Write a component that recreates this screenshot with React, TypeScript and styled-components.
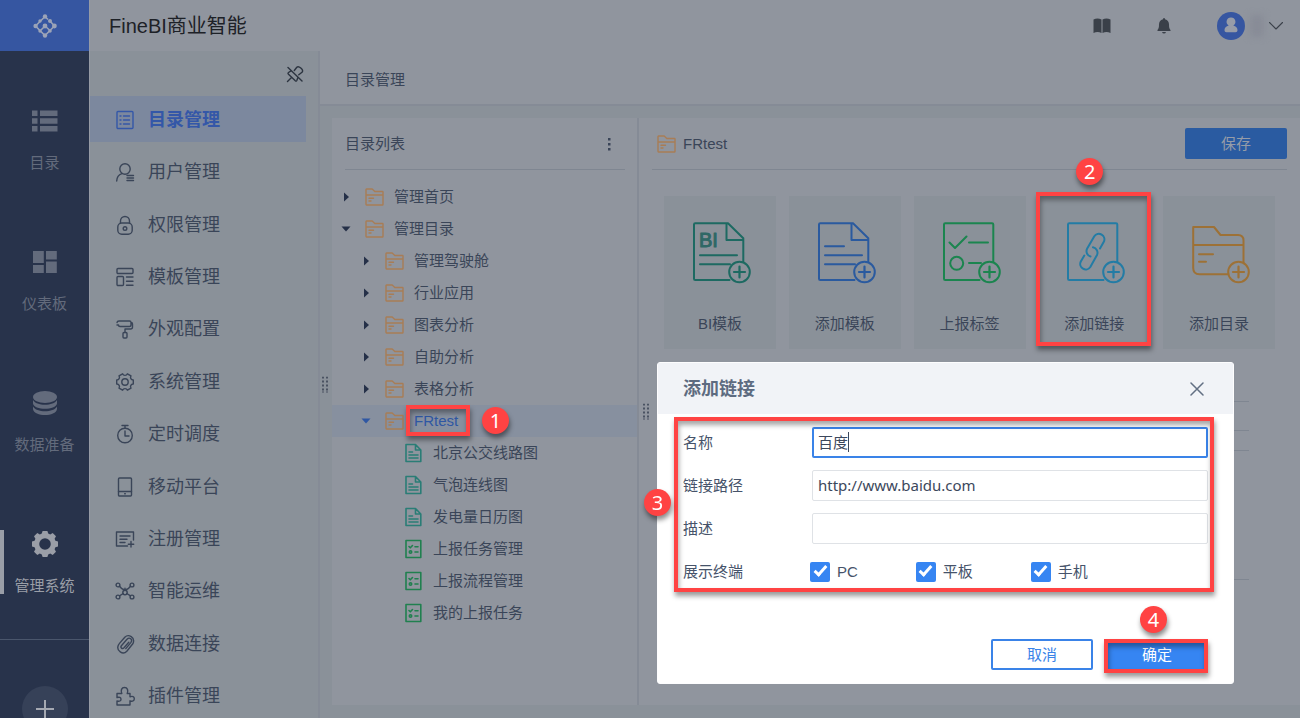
import React from 'react';
import styled, { createGlobalStyle, css } from 'styled-components';

const sans = "'Liberation Sans', 'Noto Sans CJK SC', sans-serif";

const c = {
  surface: '#90959e',
  ground: '#8a9199',
  line: '#858b96',
  rule: '#7f8691',
  rail: '#28334b',
  brand: '#3656a1',
  text: '#3a4558',
  blue: '#2f57a3',
  button: '#2a5ba1',
  orange: '#a87d56',
  teal: '#2a7d76',
  green: '#20804f',
  red: '#ff4343',
  accent: '#3685f2',
};

const GlobalStyle = createGlobalStyle`
  *, *::before, *::after { box-sizing: border-box; }
  body { margin: 0; background: ${c.ground}; color: ${c.text}; font: 15px/24px ${sans}; }
  button, input { font-family: inherit; font-size: inherit; color: inherit; }
  button { margin: 0; padding: 0; border: 0; background: none; cursor: pointer; }
  a { color: inherit; text-decoration: none; }
  ul { margin: 0; padding: 0; list-style: none; }
  h1, h2, p { margin: 0; font-weight: 400; }
  svg { display: block; flex: none; }
`;

/* ---------- frame ---------- */

const Page = styled.div`
  display: grid;
  grid-template: 51px minmax(0, 1fr) / 90px minmax(0, 1fr);
  height: 100vh;
  overflow: hidden;
`;

const Logo = styled.a`
  display: flex;
  align-items: center;
  justify-content: center;
  background: ${c.brand};
  border-right: 1px solid #969ba5;
`;

const TopBar = styled.header`
  display: flex;
  align-items: center;
  padding: 0 17px 0 19px;
  background: ${c.surface};
`;

const Product = styled.h1`
  flex: 1;
  font-size: 20px;
  line-height: 28px;
  color: #1d2127;
`;

const TopTools = styled.div`
  display: flex;
  align-items: center;
  color: #3a4049;
`;

const ToolButton = styled.button`
  display: flex;
  margin-right: 46px;
`;

const UserButton = styled.button`
  display: flex;
  align-items: center;
  gap: 5px;
`;

const BlurredName = styled.span`
  width: 14px;
  height: 22px;
  background: #888c97;
  filter: blur(3px);
`;

/* ---------- left rail ---------- */

const Rail = styled.nav`
  overflow: hidden;
  padding-top: 24px;
  background: ${c.rail};
  border-right: 1px solid #969ba5;
`;

const RailLink = styled.a<{ $active?: boolean }>`
  position: relative;
  display: flex;
  flex-direction: column;
  align-items: center;
  gap: 17px;
  height: 141px;
  padding-top: 33px;
  color: ${p => (p.$active ? '#9a9ea7' : '#636b7c')};
  ${p => p.$active && css`
    &::before {
      content: '';
      position: absolute;
      left: 0;
      top: 32px;
      width: 4px;
      height: 64px;
      background: #9a9ea7;
    }
  `}
`;

const RailFoot = styled.div`
  display: flex;
  justify-content: center;
  padding-top: 46px;
  border-top: 1px solid #4a566c;
`;

const RoundButton = styled.button`
  display: flex;
  align-items: center;
  justify-content: center;
  width: 46px;
  height: 46px;
  border-radius: 50%;
  background: #364158;
  color: #a5a9b2;
`;

/* ---------- management menu ---------- */

const Body = styled.div`
  display: grid;
  grid-template-columns: 230px minmax(0, 1fr);
  min-height: 0;
`;

const Side = styled.aside`
  position: relative;
  display: flex;
  flex-direction: column;
  min-height: 0;
  border-right: 2px solid ${c.line};
`;

const PinBar = styled.div`
  display: flex;
  align-items: center;
  justify-content: flex-end;
  height: 45px;
  padding-right: 14px;
  color: #2c3440;
`;

const Menu = styled.ul`
  flex: 1;
  display: flex;
  flex-direction: column;
  justify-content: space-between;
`;

const MenuLink = styled.a<{ $active?: boolean }>`
  display: flex;
  align-items: center;
  gap: 13px;
  height: 46px;
  margin-right: 12px;
  padding: 2px 0 0 25px;
  font-size: 18px;
  ${p => p.$active && css`
    background: #7c889e;
    color: #3457a8;
    font-weight: 700;
  `}
`;

const Grip = styled.span`
  position: absolute;
  top: 50%;
  left: 100%;
  transform: translateY(-50%);
  padding-left: 4px;
  color: #4a5362;
`;

/* ---------- content ---------- */

const Main = styled.main`
  display: grid;
  grid-template-rows: 55px minmax(0, 1fr);
  min-height: 0;
`;

const Crumb = styled.div`
  display: flex;
  align-items: center;
  padding: 4px 0 0 25px;
  background: ${c.surface};
  border-bottom: 2px solid ${c.line};
`;

const Panels = styled.div`
  display: grid;
  grid-template-columns: 307px minmax(0, 1fr);
  min-height: 0;
  margin: 12px 0 13px 12px;
  background: ${c.surface};
`;

const TreePanel = styled.section`
  position: relative;
  border-right: 2px solid ${c.line};
`;

const TreeHead = styled.div`
  display: flex;
  align-items: center;
  justify-content: space-between;
  height: 52px;
  margin: 0 12px 11px 13px;
  padding-right: 12px;
  border-bottom: 1px solid ${c.rule};
`;

const Row = styled.li<{ $level: number; $selected?: boolean }>`
  display: flex;
  align-items: center;
  height: 32px;
  padding-left: ${p => [7, 27, 46][p.$level]}px;
  background: ${p => (p.$selected ? '#87909f' : 'transparent')};
`;

const Toggle = styled.button`
  display: flex;
  justify-content: center;
  width: 14px;
  margin-right: 12px;
`;

const RowLink = styled.a<{ $selected?: boolean }>`
  position: relative;
  display: flex;
  align-items: center;
  height: 32px;
  gap: 10px;
  color: ${p => (p.$selected ? c.blue : 'inherit')};
`;

const Detail = styled.section`
  min-width: 0;
  position: relative;
`;

const DetailGrip = styled(Grip)`
  left: 0;
`;

const DetailHead = styled.div`
  display: flex;
  align-items: center;
  gap: 7px;
  height: 52px;
  margin: 0 13px;
  padding-left: 5px;
  border-bottom: 1px solid ${c.rule};
`;

const SaveButton = styled.button`
  width: 102px;
  height: 31px;
  margin-left: auto;
  padding-bottom: 3px;
  border-radius: 2px;
  background: ${c.button};
  color: #969ca8;
`;

const Tiles = styled.div`
  display: flex;
  justify-content: space-between;
  padding: 26px 25px 0;
`;

const Tile = styled.button`
  position: relative;
  display: flex;
  flex-direction: column;
  align-items: center;
  gap: 28px;
  width: 112px;
  height: 153px;
  padding-top: 24px;
  background: ${c.ground};
  line-height: 24px;
`;

const FieldLines = styled.div`
  padding: 24px 51px 0 25px;
`;

const FieldLine = styled.div<{ $height: number }>`
  height: ${p => p.$height}px;
  border-bottom: 1px solid ${c.rule};
`;

/* ---------- callouts ---------- */

const Callout = styled.span`
  position: absolute;
  pointer-events: none;
  border: 4px solid ${c.red};
  box-shadow: 1px 4px 5px rgba(0, 0, 0, 0.4), inset 1px 4px 5px rgba(0, 0, 0, 0.35);
`;

const Badge = styled.span`
  position: absolute;
  width: 27px;
  height: 27px;
  border-radius: 50%;
  background: ${c.red};
  box-shadow: 1px 4px 5px rgba(0, 0, 0, 0.45);
  color: #fff;
  font: 20px/27px 'Noto Sans', sans-serif;
  text-align: center;
`;

const RowCallout = styled(Callout)`left: 21px; top: 0; width: 64px; height: 31px;`;
const RowBadge = styled(Badge)`left: 97px; top: 2px;`;
const TileCallout = styled(Callout)`left: -2px; top: -4px; width: 115px; height: 154px;`;
const TileBadge = styled(Badge)`left: 38px; top: -38px;`;
const FormCallout = styled(Callout)`left: -9px; right: -6px; top: -10px; height: 175px;`;
const FormBadge = styled(Badge)`left: -39px; top: 62px;`;
const OkCallout = styled(Callout)`inset: 0 0 -3px -2px;`;
const OkBadge = styled(Badge)`left: 34px; top: -33px;`;

/* ---------- dialog ---------- */

const Dialog = styled.div`
  position: fixed;
  top: 362px;
  right: 66px;
  width: 577px;
  border: 1px solid #fdfdfe;
  border-radius: 3px;
  background: #fff;
  color: #46536a;
`;

const DialogHead = styled.div`
  display: flex;
  align-items: center;
  justify-content: space-between;
  height: 51px;
  padding: 0 29px 0 25px;
  background: #f1f3f7;
`;

const DialogTitle = styled.h2`
  font-size: 18px;
  font-weight: 700;
  color: #5d6b80;
`;

const CloseButton = styled.button`
  display: flex;
  color: #626f83;
`;

const Form = styled.form`
  padding: 13px 25px;
`;

const Fields = styled.div`
  position: relative;
  display: grid;
  grid-template-columns: 129px minmax(0, 1fr);
  grid-auto-rows: 31px;
  row-gap: 12px;
  align-items: center;
`;

const InputWrap = styled.div`
  position: relative;
`;

const TextInput = styled.input<{ $focus?: boolean }>`
  display: block;
  width: 100%;
  height: 31px;
  padding: 0 ${p => (p.$focus ? 4 : 5)}px 2px;
  border: ${p => (p.$focus ? '2px solid #3a83e8' : '1px solid #dfe2e6')};
  border-radius: 2px;
  background: #fff;
  outline: none;
  color: #3c485c;
  font-family: 'Noto Sans', 'Noto Sans CJK SC', sans-serif;
`;

const Caret = styled.span`
  position: absolute;
  left: 36px;
  top: 5px;
  width: 1px;
  height: 20px;
  background: #3c485c;
`;

const Checks = styled.div`
  display: flex;
  gap: 58px;
  margin-left: -2px;
`;

const CheckLabel = styled.label`
  display: flex;
  align-items: center;
  gap: 7px;
`;

const Check = styled.input`
  appearance: none;
  width: 20px;
  height: 20px;
  margin: 0;
  border-radius: 2px;
  background: ${c.accent};
  display: grid;
  place-items: center;
  &:checked::before {
    content: '';
    width: 7px;
    height: 13px;
    margin-top: -4px;
    border: solid #fff;
    border-width: 0 3px 3px 0;
    transform: rotate(42deg);
  }
`;

const Actions = styled.div`
  display: flex;
  justify-content: flex-end;
  gap: 13px;
  padding-top: 52px;
`;

const ActionButton = styled.button<{ $primary?: boolean }>`
  position: relative;
  width: 102px;
  height: 31px;
  padding-bottom: 3px;
  border-radius: 2px;
  border: ${p => (p.$primary ? '0' : '2px solid #3a83e8')};
  background: ${p => (p.$primary ? c.accent : '#fff')};
  color: ${p => (p.$primary ? '#fff' : '#3a83e8')};
`;

/* ---------- drawings ---------- */

const line = { fill: 'none', stroke: 'currentColor', strokeWidth: 1.4, strokeLinecap: 'round', strokeLinejoin: 'round' } as const;

const menuShapes: Record<string, React.ReactNode> = {
  list: <><rect x="2" y="1.5" width="16" height="17" rx="1" /><path d="M5 6h1M5 10h1M5 14h1M8.5 6h6M8.5 10h6M8.5 14h6" /></>,
  user: <><circle cx="10" cy="7" r="5.2" /><path d="M6.8 11.6C3.500 12.800 1.800 15.500 1.700 19M12 13.500h6.500M12 16h6.500M12 18.500h6.500" /></>,
  lock: <><path d="M5.500 8V6a4.500 4.500 0 0 1 9 0v2" /><rect x="2.800" y="8" width="14.400" height="11.200" rx="4" /><circle cx="10" cy="13.600" r="1.800" /></>,
  template: <><rect x="2" y="1.500" width="16" height="5" rx="1" /><rect x="2" y="9.500" width="6.500" height="9" rx="1" /><path d="M11.500 10h6.500M11.500 14.200h6.500M11.500 18.300h6.500" /></>,
  roller: <><path d="M4 2h10.500q1.500 0 1.500 1.500v2.500q0 1.500-1.500 1.500H5Q3.500 7.500 3.500 6H2M2 3.500Q2.300 2 4 2M16 3.500q1.500 0 1.500 1.500v3q0 2-2 2H10v3.500" /><rect x="8" y="13.500" width="4" height="5.500" rx="1" /></>,
  gear: <><circle cx="10" cy="10" r="3.200" /><path d="M7.600 1.800a2.600 2.600 0 0 0 4.800 0l3.600 2.100a2.600 2.600 0 0 0 2.300 4.100v4a2.600 2.600 0 0 0-2.300 4.100l-3.600 2.100a2.600 2.600 0 0 0-4.800 0l-3.600-2.100A2.600 2.600 0 0 0 1.700 12V8A2.600 2.600 0 0 0 4 3.900z" /></>,
  timer: <><circle cx="10" cy="11.500" r="7.300" /><path d="M7 1.500h6M10 1.500v2.500M10 7v5h4" /></>,
  phone: <><rect x="3.500" y="1" width="13" height="18" rx="1" /><path d="M3.500 14.500h13M9.700 16.800h.6" /></>,
  register: <><path d="M18.500 11V3H1.500v14h11M5 7h10M5 10.200h7M5 13.500h5M16 12.500v5.500M13.300 15.200h5.400" /></>,
  ops: <><circle cx="3" cy="4" r="1.900" /><circle cx="17" cy="4" r="1.900" /><circle cx="3" cy="16" r="1.900" /><circle cx="17" cy="16" r="1.900" /><circle cx="10" cy="11.500" r="2.200" /><path d="M4.500 5.200Q7 9 10 9t5.500-3.800M4.500 14.800 8.200 12.500M15.500 14.800l-3.700-2.300M10 7.200v2" /></>,
  clip: <path d="M13.800 8.200 9 13.800c-1.700 1.800-4-.2-2.600-2L12 5.300c2.600-2.700 6 .2 3.800 3.300l-5 6M18 9.500l-6.200 7.700C8 21.300 1 17 3.300 11.300c.4-1 1-1.700 1.600-2.400L9.800 3.300C13.500-.6 20.500 3.500 18 9.500z" />,
  plugin: <path d="M2 7.500h4.800C5.500 4.500 6.500 1.500 9.500 1.500s4 3 2.700 6H15v3.300c2.500-1.100 4.300 0 4.300 2s-1.800 3.100-4.300 2V19H2v-4c2.500.8 4-.2 4-1.800S4.500 10.700 2 11.500z" />,
};

const MenuIcon = ({ name }: { name: string }) => (
  <svg width="20" height="20" viewBox="0 0 20 20" {...line}>{menuShapes[name]}</svg>
);

const railShapes: Record<string, React.ReactNode> = {
  list: <path d="M0 2.500h5.500v5.500H0zM8 2.500h17.500v5.500H8zM0 10.200h5.500v5.500H0zM8 10.200h17.500v5.500H8zM0 18h5.500v5.500H0zM8 18h17.500v5.500H8z" />,
  board: <path d="M1 2h10.800v12H1zM14 2h10.800v8.500H14zM1 16h10.800v8H1zM14 12.500h10.800V24H14z" />,
  data: <><ellipse cx="13" cy="7" rx="12" ry="6" /><path d="M1 10c3 6.300 21 6.300 24 0v3.500c-1 7-23 7-24 0zM1 16.500c3 6.300 21 6.300 24 0V19c-1 8-23 8-24 0z" /></>,
  gear: <path fillRule="evenodd" d="M9.800 2.600 10.600 0h4.800l.8 2.600 2 .9L20.700 2 24 5.300l-1.400 2.500.8 2 2.600.8v4.800l-2.600.8-.8 2 1.400 2.500L20.700 24l-2.500-1.400-2 .8-.8 2.600h-4.800l-.8-2.600-2-.8L5.300 24 2 20.700l1.400-2.500-.8-2L0 15.400v-4.800l2.600-.8.8-2L2 5.300 5.300 2l2.500 1.500zM13 7.200a5.800 5.800 0 1 0 0 11.600 5.800 5.800 0 0 0 0-11.600z" />,
};

const RailIcon = ({ name }: { name: string }) => (
  <svg width="26" height="26" viewBox="0 0 26 26" fill="currentColor">{railShapes[name]}</svg>
);

const LogoMark = () => (
  <svg width="24" height="24" viewBox="0 0 24 24" fill="none" stroke="#9ba3b7" strokeWidth="1.600">
    <path d="M12 2.500 2.500 12l9.500 9.500 4.500-4.500M12 2.500l3 3M7 17l5-5 5 4.500 4.400-4.500L17 7" />
    <g fill="#9ba3b7" stroke="none">
      <circle cx="12" cy="2.500" r="2.200" /><circle cx="2.600" cy="12" r="2.200" /><circle cx="12" cy="21.500" r="2.200" />
      <circle cx="21.400" cy="12" r="2.400" /><circle cx="12" cy="12" r="2.400" /><circle cx="17" cy="7" r="2" />
      <circle cx="17" cy="17" r="1.800" /><circle cx="7" cy="7" r="1.700" /><circle cx="7" cy="17" r="1.700" />
    </g>
  </svg>
);

const Folder = () => (
  <svg width="19" height="18" viewBox="0 0 19 18" {...line} stroke={c.orange}>
    <path d="M1 16V1.500Q1 1 1.500 1h5.700l2.600 2.500h7.700q.5 0 .5.500v12.500q0 .5-.5.500h-16Q1 17 1 16zM1 7h17M4 10.300h4.500M4 13h2" />
  </svg>
);

const DocIcon = () => (
  <svg width="19" height="20" viewBox="0 0 19 20" {...line} strokeWidth={1.600} stroke={c.teal}>
    <path d="M2 1.500h9.500L16.800 7v11.500H2zM11.500 1.500V7h5.300M5 9h3.500M5 12h9M5 15h9" />
  </svg>
);

const TaskIcon = () => (
  <svg width="19" height="20" viewBox="0 0 19 20" {...line} strokeWidth={1.600} stroke={c.green}>
    <path d="M2 1.500h14.800v17H2zM5 7.500l1.300 1.300L8.500 6.500M11 7.800h3M11 13h3" /><circle cx="6.500" cy="13" r="1.200" />
  </svg>
);

const Dots = () => (
  <svg width="8" height="17" viewBox="0 0 8 17" fill="currentColor">
    {[0, 4, 8, 12].map(y => <path key={y} d={`M0 ${y}h2v2H0zM4 ${y}h2v2H4z`} />)}
    <path d="M0 15h2v1H0zM4 15h2v1H4z" />
  </svg>
);

const tileDoc = 'M38.500 60H4.300Q3 60 3 58.700V4.500Q3 3.300 4.300 3.300H37L52.300 18.300V43M35.500 3.300V20H52';
const tileSheet = 'M38.500 60H4.300Q3 60 3 58.700V4.500Q3 3.300 4.300 3.300H51Q52.300 3.300 52.300 4.500V43';

const TileIcon = ({ color, children }: { color: string; children: React.ReactNode }) => (
  <svg width="60" height="64" viewBox="-1 0 60 64" overflow="visible" {...line} strokeWidth={2} stroke={color}>
    {children}
    <circle cx="48.500" cy="52" r="10.300" fill={c.ground} />
    <path d="M43 52h11M48.500 46.500v11" strokeWidth={2.200} />
  </svg>
);

const rail = [
  { icon: 'list', label: '目录' },
  { icon: 'board', label: '仪表板' },
  { icon: 'data', label: '数据准备' },
  { icon: 'gear', label: '管理系统', active: true },
];

const menu = [
  ['list', '目录管理'], ['user', '用户管理'], ['lock', '权限管理'], ['template', '模板管理'],
  ['roller', '外观配置'], ['gear', '系统管理'], ['timer', '定时调度'], ['phone', '移动平台'],
  ['register', '注册管理'], ['ops', '智能运维'], ['clip', '数据连接'], ['plugin', '插件管理'],
];

type Node = { label: string; level: number; kind: 'folder' | 'doc' | 'task'; open?: boolean; selected?: boolean };

const nodes: Node[] = [
  { label: '管理首页', level: 0, kind: 'folder' },
  { label: '管理目录', level: 0, kind: 'folder', open: true },
  { label: '管理驾驶舱', level: 1, kind: 'folder' },
  { label: '行业应用', level: 1, kind: 'folder' },
  { label: '图表分析', level: 1, kind: 'folder' },
  { label: '自助分析', level: 1, kind: 'folder' },
  { label: '表格分析', level: 1, kind: 'folder' },
  { label: 'FRtest', level: 1, kind: 'folder', open: true, selected: true },
  { label: '北京公交线路图', level: 2, kind: 'doc' },
  { label: '气泡连线图', level: 2, kind: 'doc' },
  { label: '发电量日历图', level: 2, kind: 'doc' },
  { label: '上报任务管理', level: 2, kind: 'task' },
  { label: '上报流程管理', level: 2, kind: 'task' },
  { label: '我的上报任务', level: 2, kind: 'task' },
];

const kindIcon = { folder: <Folder />, doc: <DocIcon />, task: <TaskIcon /> };

const TreeRow = ({ node }: { node: Node }) => (
  <Row $level={node.level} $selected={node.selected}>
    {node.kind === 'folder' ? (
      <Toggle aria-label={node.open ? '收起' : '展开'}>
        <svg width="10" height="10" viewBox="0 0 10 10" fill={node.selected ? c.blue : '#253048'}>
          <path d={node.open ? 'M0.500 2.500h9L5 7.500z' : 'M3 0.500 8 5 3 9.500z'} />
        </svg>
      </Toggle>
    ) : <Toggle as="span" />}
    <RowLink href="#" $selected={node.selected}>
      {kindIcon[node.kind]}
      {node.label}
      {node.selected && <><RowCallout /><RowBadge>1</RowBadge></>}
    </RowLink>
  </Row>
);

export default function App() {
  return (
    <>
      <GlobalStyle />
      <Page>
        <Logo href="#" aria-label="FineBI"><LogoMark /></Logo>
        <TopBar>
          <Product>FineBI商业智能</Product>
          <TopTools>
            <ToolButton aria-label="帮助">
              <svg width="18" height="16" viewBox="0 0 18 16" fill="currentColor">
                <path d="M.5 1.500Q4.500-.5 8.500 1.500V15Q4.500 13 .5 15zM9.500 1.500q4-2 8 0V15q-4-2-8 0z" />
              </svg>
            </ToolButton>
            <ToolButton aria-label="消息">
              <svg width="14" height="16" viewBox="0 0 14 16" fill="currentColor">
                <path d="M7 0q1 0 1 1.200C10.800 1.700 12 4 12 6.500c0 3 .3 4 1.500 5.500v1H.5v-1C1.700 10.500 2 9.500 2 6.500 2 4 3.200 1.700 6 1.200 6 0 7 0 7 0zM5 14h4q-.5 1.500-2 1.500T5 14z" />
              </svg>
            </ToolButton>
            <UserButton aria-label="用户">
              <svg width="28" height="28" viewBox="0 0 28 28">
                <circle cx="14" cy="14" r="14" fill={c.brand} />
                <path fill="#979ca8" d="M14 5.500a4.300 4.300 0 0 1 2.300 8c2.700.7 4.200 2.500 4.200 4.500 0 1.500-.8 2.200-2 2.200h-9c-1.200 0-2-.7-2-2.200 0-2 1.500-3.800 4.200-4.500a4.300 4.300 0 0 1 2.300-8z" />
              </svg>
              <BlurredName />
              <svg width="14" height="8" viewBox="0 0 14 8" {...line} strokeWidth={1.100}><path d="M.5.5 7 7l6.500-6.500" /></svg>
            </UserButton>
          </TopTools>
        </TopBar>

        <Rail>
          {rail.map(item => (
            <RailLink key={item.label} href="#" $active={item.active}>
              <RailIcon name={item.icon} />
              {item.label}
            </RailLink>
          ))}
          <RailFoot>
            <RoundButton aria-label="新建">
              <svg width="18" height="18" viewBox="0 0 18 18" stroke="currentColor" strokeWidth="2"><path d="M0 9h18M9 0v18" /></svg>
            </RoundButton>
          </RailFoot>
        </Rail>

        <Body>
          <Side>
            <PinBar>
              <button aria-label="取消固定">
                <svg width="18" height="18" viewBox="0 0 18 18" {...line}>
                  <path d="M2 2.500 16 16M8.300 5.500l2.500-3.200q1.500-1.500 4 .7 2.800 2.500 1.200 4.200l-3.200 2.600M5 5.800 2.500 7.500q-1 .8 0 1.700l6.800 6.500q1 .9 1.500-.2l1-2.700M5.500 12.500 1.500 16.500" />
                </svg>
              </button>
            </PinBar>
            <Menu>
              {menu.map(([icon, label], i) => (
                <li key={label}>
                  <MenuLink href="#" $active={i === 0}><MenuIcon name={icon} />{label}</MenuLink>
                </li>
              ))}
            </Menu>
            <Grip><Dots /></Grip>
          </Side>

          <Main>
            <Crumb>目录管理</Crumb>
            <Panels>
              <TreePanel>
                <TreeHead>
                  目录列表
                  <button aria-label="更多">
                    <svg width="6" height="14" viewBox="0 0 6 14" fill="currentColor"><path d="M1 1h2.500v2.500H1zM1 6h2.500v2.500H1zM1 11h2.500v2.500H1z" /></svg>
                  </button>
                </TreeHead>
                <ul>{nodes.map(n => <TreeRow key={n.label} node={n} />)}</ul>
              </TreePanel>

              <Detail>
                <DetailGrip><Dots /></DetailGrip>
                <DetailHead>
                  <Folder />
                  FRtest
                  <SaveButton>保存</SaveButton>
                </DetailHead>
                <Tiles>
                  <Tile>
                    <TileIcon color="#1d6a62">
                      <path d={tileDoc} /><path d="M9 35.300h37M9 44.300h30" />
                      <text x="8" y="27" fontSize="20" fill="#2f6866" stroke="#2f6866" strokeWidth="1" fontFamily="Liberation Sans">BI</text>
                    </TileIcon>
                    BI模板
                  </Tile>
                  <Tile>
                    <TileIcon color="#2a5a9f"><path d={tileDoc} /><path d="M9 26.300h19M9 35.300h37M9 44.300h30" /></TileIcon>
                    添加模板
                  </Tile>
                  <Tile>
                    <TileIcon color="#1b854f">
                      <path d={tileSheet} /><path d="m8.500 22.500 5.500 5.500 11.500-11.500M28 22.500h19M28 43h12" /><circle cx="15.700" cy="43.300" r="6.500" />
                    </TileIcon>
                    上报标签
                  </Tile>
                  <Tile>
                    <TileIcon color="#237ca5">
                      <path d={tileSheet} />
                      <path d="M35 28.500 38.800 21.800A5.500 5.500 0 0 0 29.300 16.300L22.200 28.600A5.500 5.500 0 0 0 25.500 36.500M19.300 35.500 15.800 41.500A5.500 5.500 0 0 0 25.300 47L32 35A5.500 5.500 0 0 0 28 27.300" />
                    </TileIcon>
                    添加链接
                    <TileCallout />
                    <TileBadge>2</TileBadge>
                  </Tile>
                  <Tile>
                    <TileIcon color="#9d7136">
                      <path d="M38.500 54.300H9.500Q3.200 54.300 3.200 48V7H24l6.500 8H48q5.500 0 5.500 5.500V43M3.200 25h50M9 34.300h14M9 41.700h7" />
                    </TileIcon>
                    添加目录
                  </Tile>
                </Tiles>
                <FieldLines>
                  <FieldLine $height={29} />
                  <FieldLine $height={29} />
                  <FieldLine $height={20} />
                  <FieldLine $height={129} />
                </FieldLines>
              </Detail>
            </Panels>
          </Main>
        </Body>
      </Page>

      <Dialog role="dialog" aria-labelledby="dialog-title">
        <DialogHead>
          <DialogTitle id="dialog-title">添加链接</DialogTitle>
          <CloseButton aria-label="关闭">
            <svg width="14" height="14" viewBox="0 0 14 14" {...line} strokeWidth={1.500}><path d="m1 1 12 12M13 1 1 13" /></svg>
          </CloseButton>
        </DialogHead>
        <Form onSubmit={e => e.preventDefault()}>
          <Fields>
            <label htmlFor="name">名称</label>
            <InputWrap><TextInput id="name" $focus defaultValue="百度" /><Caret /></InputWrap>
            <label htmlFor="path">链接路径</label>
            <TextInput id="path" defaultValue="http://www.baidu.com" />
            <label htmlFor="desc">描述</label>
            <TextInput id="desc" />
            <span id="devices">展示终端</span>
            <Checks role="group" aria-labelledby="devices">
              {['PC', '平板', '手机'].map(d => (
                <CheckLabel key={d}><Check type="checkbox" defaultChecked />{d}</CheckLabel>
              ))}
            </Checks>
            <FormCallout />
            <FormBadge>3</FormBadge>
          </Fields>
          <Actions>
            <ActionButton type="button">取消</ActionButton>
            <ActionButton type="submit" $primary>
              确定
              <OkCallout />
              <OkBadge>4</OkBadge>
            </ActionButton>
          </Actions>
        </Form>
      </Dialog>
    </>
  );
}
